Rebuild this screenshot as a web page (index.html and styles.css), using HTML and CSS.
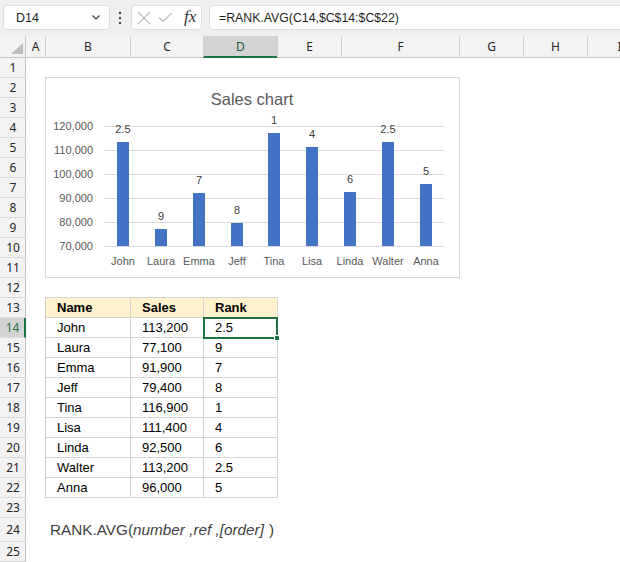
FILE: index.html
```html
<!DOCTYPE html>
<html>
<head>
<meta charset="utf-8">
<link rel="stylesheet" href="styles.css">
</head>
<body>
<div class="toolbar">
  <div class="namebox">
    <span>D14</span>
    <svg class="chev" width="8" height="5" viewBox="0 0 8 5"><polyline points="0.5,0.5 4,4 7.5,0.5" fill="none" stroke="#3a3a3a" stroke-width="1.2"/></svg>
  </div>
  <div class="dots">
    <svg width="4" height="14" viewBox="0 0 4 14"><circle cx="2" cy="2" r="1.2" fill="#444"/><circle cx="2" cy="7" r="1.2" fill="#444"/><circle cx="2" cy="12" r="1.2" fill="#444"/></svg>
  </div>
  <div class="fxbox">
    <svg class="icon-x" width="14" height="14" viewBox="0 0 14 14"><path d="M1 1 L13 13 M13 1 L1 13" stroke="#b8b8b8" stroke-width="1.1" fill="none"/></svg>
    <svg class="icon-check" width="15" height="11" viewBox="0 0 15 11"><polyline points="1,5.5 5,9.5 14,0.8" fill="none" stroke="#b8b8b8" stroke-width="1.1"/></svg>
    <span class="fx">fx</span>
  </div>
  <div class="formula">=RANK.AVG(C14,$C$14:$C$22)</div>
</div>

<div class="sheet">
  <div class="colheads">
    <div class="corner"><svg width="25" height="21" viewBox="0 0 25 21"><polygon points="23,7 23,18 11,18" fill="#bfbfbf"/></svg></div>
    <div class="ch w-a">A</div>
    <div class="ch w-b">B</div>
    <div class="ch w-c">C</div>
    <div class="ch w-d sel">D</div>
    <div class="ch w-e">E</div>
    <div class="ch w-f">F</div>
    <div class="ch w-g">G</div>
    <div class="ch w-h">H</div>
    <div class="ch w-i">I</div>
  </div>
  <div class="body">
    <div class="rowheads">
      <div class="rh">1</div><div class="rh">2</div><div class="rh">3</div><div class="rh">4</div><div class="rh">5</div>
      <div class="rh">6</div><div class="rh">7</div><div class="rh">8</div><div class="rh">9</div><div class="rh">10</div>
      <div class="rh">11</div><div class="rh">12</div><div class="rh">13</div><div class="rh sel">14</div><div class="rh">15</div>
      <div class="rh">16</div><div class="rh">17</div><div class="rh">18</div><div class="rh">19</div><div class="rh">20</div>
      <div class="rh">21</div><div class="rh">22</div><div class="rh">23</div><div class="rh tall">24</div><div class="rh">25</div>
    </div>
    <div class="cells">
      <div class="chart">
        <svg width="413" height="199" viewBox="0 0 413 199">
          <text class="title" x="206" y="27" text-anchor="middle">Sales chart</text>
          <g stroke="#d9d9d9" stroke-width="1">
            <line x1="58" y1="48.5" x2="398" y2="48.5"/>
            <line x1="58" y1="72.5" x2="398" y2="72.5"/>
            <line x1="58" y1="96.5" x2="398" y2="96.5"/>
            <line x1="58" y1="120.5" x2="398" y2="120.5"/>
            <line x1="58" y1="144.5" x2="398" y2="144.5"/>
            <line x1="58" y1="168.5" x2="398" y2="168.5"/>
          </g>
          <g class="axis" text-anchor="end">
            <text x="47" y="52">120,000</text>
            <text x="47" y="76">110,000</text>
            <text x="47" y="100">100,000</text>
            <text x="47" y="124">90,000</text>
            <text x="47" y="148">80,000</text>
            <text x="47" y="172">70,000</text>
          </g>
          <g fill="#4472c4">
            <rect x="71" y="64" width="12" height="104"/>
            <rect x="109" y="151" width="12" height="17"/>
            <rect x="147" y="115" width="12" height="53"/>
            <rect x="185" y="145" width="12" height="23"/>
            <rect x="222" y="55" width="12" height="113"/>
            <rect x="260" y="69" width="12" height="99"/>
            <rect x="298" y="114" width="12" height="54"/>
            <rect x="336" y="64" width="12" height="104"/>
            <rect x="374" y="106" width="12" height="62"/>
          </g>
          <g class="dlabel" text-anchor="middle">
            <text x="77" y="55">2.5</text>
            <text x="115" y="142">9</text>
            <text x="153" y="106">7</text>
            <text x="191" y="136">8</text>
            <text x="228" y="46">1</text>
            <text x="266" y="60">4</text>
            <text x="304" y="105">6</text>
            <text x="342" y="55">2.5</text>
            <text x="380" y="97">5</text>
          </g>
          <g class="axis" text-anchor="middle">
            <text x="77" y="187">John</text>
            <text x="115" y="187">Laura</text>
            <text x="153" y="187">Emma</text>
            <text x="191" y="187">Jeff</text>
            <text x="228" y="187">Tina</text>
            <text x="266" y="187">Lisa</text>
            <text x="304" y="187">Linda</text>
            <text x="342" y="187">Walter</text>
            <text x="380" y="187">Anna</text>
          </g>
        </svg>
      </div>

      <div class="tbl">
        <div class="c hd">Name</div><div class="c hd">Sales</div><div class="c hd">Rank</div>
        <div class="c">John</div><div class="c">113,200</div><div class="c active">2.5<span class="handle"></span></div>
        <div class="c">Laura</div><div class="c">77,100</div><div class="c">9</div>
        <div class="c">Emma</div><div class="c">91,900</div><div class="c">7</div>
        <div class="c">Jeff</div><div class="c">79,400</div><div class="c">8</div>
        <div class="c">Tina</div><div class="c">116,900</div><div class="c">1</div>
        <div class="c">Lisa</div><div class="c">111,400</div><div class="c">4</div>
        <div class="c">Linda</div><div class="c">92,500</div><div class="c">6</div>
        <div class="c">Walter</div><div class="c">113,200</div><div class="c">2.5</div>
        <div class="c">Anna</div><div class="c">96,000</div><div class="c">5</div>
      </div>

      <div class="syntax">RANK.AVG(<i>number ,ref ,[order]</i><span class="close">)</span></div>
    </div>
  </div>
</div>
</body>
</html>
```

FILE: styles.css
```css
* { box-sizing: border-box; margin: 0; padding: 0; }
html, body { width: 620px; height: 562px; overflow: hidden; background: #fff; }
body { font-family: "Liberation Sans", Arial, sans-serif; color: #000; }

/* toolbar */
.toolbar {
  height: 36px;
  background: #efefef;
  display: flex;
  align-items: flex-start;
  padding: 5px 0 0 3px;
}
.namebox {
  flex: none;
  width: 107px;
  height: 25px;
  background: #fff;
  border: 1px solid #dedede;
  border-radius: 4px;
  display: flex;
  align-items: center;
  justify-content: space-between;
  padding: 0 9px 0 12px;
  font-size: 12.5px;
  color: #1f1f1f;
}
.chev { display: block; }
.dots {
  flex: none;
  width: 21px;
  height: 25px;
  display: flex;
  align-items: center;
  justify-content: center;
}
.dots svg { display: block; margin-left: -1px; }
.fxbox {
  flex: none;
  width: 71px;
  height: 25px;
  background: #fff;
  border: 1px solid #dedede;
  border-radius: 4px;
  display: flex;
  align-items: center;
  padding-left: 5px;
}
.icon-x { display: block; }
.icon-check { display: block; margin-left: 7px; }
.fx {
  margin-left: 11px;
  font-family: "Liberation Serif", "Times New Roman", serif;
  font-style: italic;
  font-size: 17px;
  color: #333;
  line-height: 1;
  margin-top: -2px;
}
.formula {
  flex: 1;
  margin-left: 7px;
  margin-right: -8px;
  height: 25px;
  background: #fff;
  border: 1px solid #dedede;
  border-radius: 4px;
  display: flex;
  align-items: center;
  padding-left: 9px;
  font-size: 12.3px;
  color: #1f1f1f;
}

/* headers */
.colheads {
  display: flex;
  height: 22px;
  background: #f3f3f3;
}
.corner {
  flex: none;
  width: 26px;
  border-right: 1px solid #c6c6c6;
  border-bottom: 1px solid #c6c6c6;
}
.corner svg { display: block; }
.ch {
  flex: none;
  display: flex;
  align-items: center;
  justify-content: center;
  border-left: 1px solid #d0d0d0;
  border-bottom: 1px solid #c6c6c6;
  font-family: "Noto Sans", "Open Sans", sans-serif;
  font-size: 12px;
  color: #262626;
}
.w-a { width: 19px; border-left: none; }
.w-b { width: 85px; }
.w-c { width: 73px; }
.w-d { width: 74px; }
.w-e { width: 64px; }
.w-f { width: 118px; }
.w-g { width: 64px; }
.w-h { width: 64px; }
.w-i { width: 64px; }
.ch.sel {
  background: #d3d3d3;
  border-bottom: 2px solid #1e7145;
  color: #155a34;
}

.body { display: flex; }
.rowheads {
  flex: none;
  width: 26px;
  display: flex;
  flex-direction: column;
}
.rh {
  height: 20px;
  flex: none;
  background: #f3f3f3;
  border-right: 1px solid #c6c6c6;
  border-bottom: 1px solid #dadada;
  display: flex;
  align-items: center;
  justify-content: center;
  font-family: "Noto Sans", "Open Sans", sans-serif;
  font-size: 12px;
  color: #262626;
  padding-left: 1px;
}
.rh.tall { height: 24px; }
.rh.sel {
  background: #d3d3d3;
  border-right: 2px solid #1e7145;
  color: #1e7145;
}

/* cell grid */
.cells {
  flex: none;
  display: grid;
  grid-template-columns: 19px 85px 73px 74px 64px 118px 64px 64px 64px;
  grid-template-rows: repeat(23, 20px) 24px 20px;
}

.chart {
  grid-column: 2 / 7;
  grid-row: 2 / 12;
  margin-top: -1px;
  width: 415px;
  height: 201px;
  border: 1px solid #d9d9d9;
  background: #fff;
}
.chart svg { display: block; }
.chart text { font-family: "Liberation Sans", Arial, sans-serif; }
.chart .title { font-size: 16.5px; fill: #595959; }
.chart .axis text { font-size: 11px; fill: #595959; }
.chart .dlabel text { font-size: 11px; fill: #404040; }

.tbl {
  grid-column: 2 / 5;
  grid-row: 13 / 23;
  margin-top: -1px;
  width: 233px;
  height: 201px;
  display: grid;
  grid-template-columns: 85px 73px 74px;
  grid-auto-rows: 20px;
  border-right: 1px solid #d4d4d4;
  border-bottom: 1px solid #d4d4d4;
}
.c {
  border-left: 1px solid #d4d4d4;
  border-top: 1px solid #d4d4d4;
  display: flex;
  align-items: center;
  padding-left: 11px;
  font-size: 13px;
  color: #000;
  white-space: nowrap;
}
.c.hd { background: #fff2cc; font-weight: bold; }
.c.active { position: relative; }
.c.active::after {
  content: "";
  position: absolute;
  left: -1px;
  top: -1px;
  right: -1px;
  bottom: -2px;
  border: 2px solid #1e7145;
}
.handle {
  position: absolute;
  left: 70px;
  top: 17px;
  width: 6px;
  height: 6px;
  background: #1e7145;
  border: 1px solid #fff;
  z-index: 2;
}

.syntax {
  grid-column: 2 / 8;
  grid-row: 24;
  display: flex;
  align-items: flex-end;
  padding: 0 0 3px 5px;
  font-size: 15.3px;
  color: #3f3f3f;
  white-space: nowrap;
}
.syntax i { font-style: italic; }
.syntax .close { margin-left: 5px; }
```
